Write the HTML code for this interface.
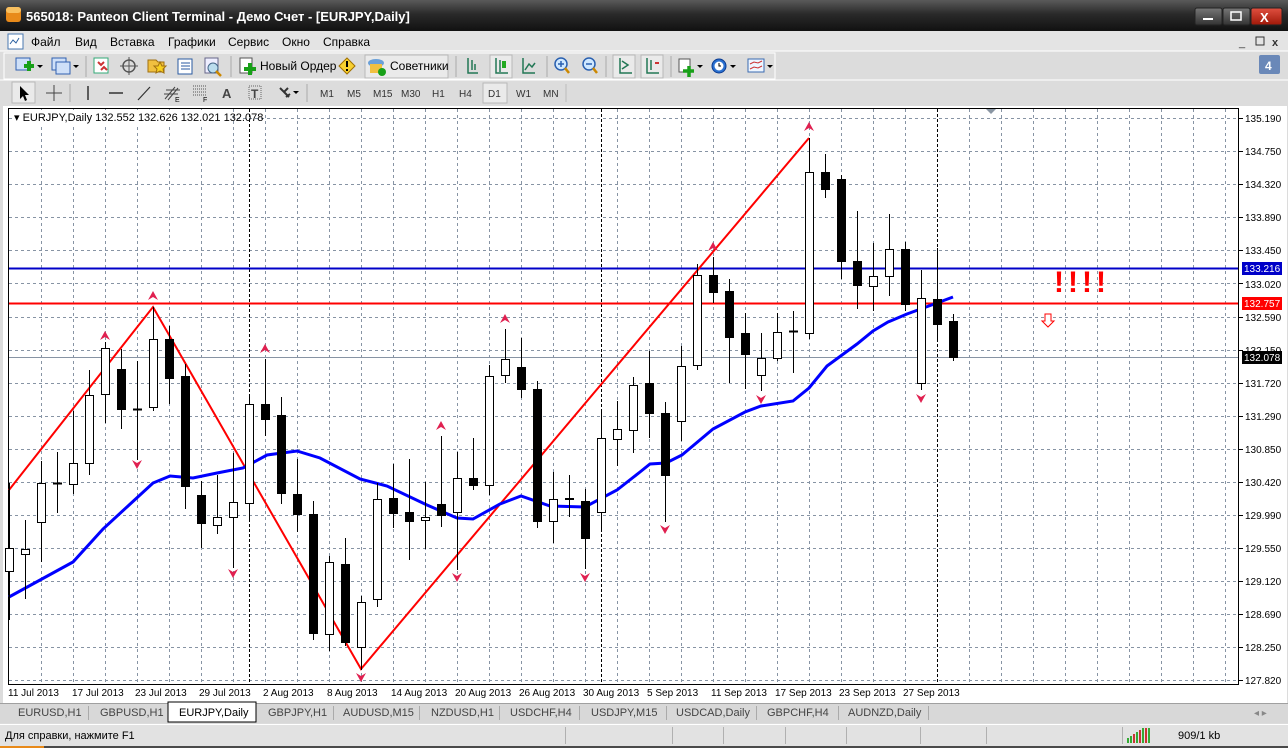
<!DOCTYPE html>
<html><head><meta charset="utf-8"><style>
html,body{margin:0;padding:0;width:1288px;height:748px;overflow:hidden;background:#dcdcdc}
svg{display:block}
text{font-family:"Liberation Sans",sans-serif}
</style></head><body>
<svg width="1288" height="748" viewBox="0 0 1288 748" xmlns="http://www.w3.org/2000/svg">
<defs>
<linearGradient id="tb" x1="0" y1="0" x2="0" y2="1"><stop offset="0" stop-color="#5a5a5a"/><stop offset="0.45" stop-color="#2a2a2a"/><stop offset="1" stop-color="#111"/></linearGradient>
<linearGradient id="cb" x1="0" y1="0" x2="0" y2="1"><stop offset="0" stop-color="#e05040"/><stop offset="1" stop-color="#a01808"/></linearGradient>
<linearGradient id="gb" x1="0" y1="0" x2="0" y2="1"><stop offset="0" stop-color="#777"/><stop offset="1" stop-color="#333"/></linearGradient>
</defs>
<rect x="0" y="0" width="1288" height="31" fill="url(#tb)"/>
<rect x="6" y="7" width="15" height="15" rx="3" fill="#e88a1a"/><rect x="6" y="7" width="15" height="6" rx="3" fill="#f8c060"/>
<text x="26" y="21" font-size="13" font-weight="bold" fill="#fff">565018: Panteon Client Terminal - Демо Счет - [EURJPY,Daily]</text>
<rect x="1195" y="8" width="27" height="17" rx="2" fill="url(#gb)" stroke="#222"/><rect x="1203" y="18" width="10" height="2" fill="#fff"/>
<rect x="1223" y="8" width="27" height="17" rx="2" fill="url(#gb)" stroke="#222"/><rect x="1231" y="12" width="10" height="8" fill="none" stroke="#fff" stroke-width="1.5"/>
<rect x="1251" y="8" width="31" height="17" rx="2" fill="url(#cb)" stroke="#222"/><text x="1260" y="22" font-size="13" font-weight="bold" fill="#fff">X</text>
<rect x="0" y="31" width="1288" height="20" fill="#e4e4e4"/>
<rect x="8" y="34" width="15" height="15" fill="#fff" stroke="#4a78b0"/><path d="M10 44l3-4 3 3 3-5" stroke="#2a60a0" fill="none"/>
<g font-size="12" fill="#000">
<text x="31" y="46">Файл</text><text x="75" y="46">Вид</text><text x="110" y="46">Вставка</text><text x="168" y="46">Графики</text><text x="228" y="46">Сервис</text><text x="282" y="46">Окно</text><text x="323" y="46">Справка</text>
</g>
<text x="1239" y="46" font-size="11" fill="#333">_</text>
<rect x="1256" y="37" width="8" height="8" fill="none" stroke="#333"/><text x="1272" y="46" font-size="11" font-weight="bold" fill="#333">x</text>
<line x1="0" y1="51" x2="1288" y2="51" stroke="#fff"/>
<rect x="0" y="52" width="1288" height="28" fill="#dcdcdc"/>
<rect x="4" y="53" width="771" height="26" fill="none" stroke="#fff"/>
<g>
<rect x="16" y="58" width="14" height="12" fill="#cfe0f8" stroke="#3060b0"/><path d="M24 66h10M29 61v10" stroke="#18a018" stroke-width="4"/><path d="M37 65l3 3 3-3z" fill="#000"/>
<rect x="52" y="58" width="14" height="12" fill="#cfe0f8" stroke="#3060b0"/><rect x="56" y="62" width="14" height="12" fill="#cfe0f8" stroke="#3060b0"/><path d="M73 65l3 3 3-3z" fill="#000"/>
<line x1="86" y1="56" x2="86" y2="77" stroke="#aaa"/>
<rect x="94" y="58" width="14" height="15" fill="#fff" stroke="#3a7"/><path d="M98 62l3 3 3-3M101 70l3-3 3 3" stroke="#c33" stroke-width="2" fill="none"/>
<circle cx="129" cy="66" r="6" fill="none" stroke="#555" stroke-width="1.5"/><path d="M129 57v18M120 66h18" stroke="#555"/>
<path d="M148 60h8l2 2h6v10h-16z" fill="#f0c040" stroke="#a07010"/><path d="M160 62l2 4 4 0-3 3 1 4-4-2-4 2 1-4-3-3 4 0z" fill="#f8d020" stroke="#a07010"/>
<rect x="178" y="59" width="14" height="15" fill="#fff" stroke="#2a5aa0"/><path d="M181 63h9M181 66h9M181 69h9" stroke="#2a5aa0"/>
<rect x="205" y="58" width="13" height="15" fill="#eef" stroke="#668"/><circle cx="213" cy="68" r="5" fill="#bde" stroke="#468"/><path d="M216 71l5 5" stroke="#c80" stroke-width="2.5"/>
<line x1="231" y1="56" x2="231" y2="77" stroke="#aaa"/>
<rect x="240" y="58" width="12" height="15" fill="#fff" stroke="#555"/><path d="M250 63v12M244 69h12" stroke="#18a018" stroke-width="4"/>
<text x="260" y="70" font-size="12">Новый Ордер</text>
<path d="M347 58l8 8-8 8-8-8z" fill="#f8d030" stroke="#a07000"/><rect x="346" y="61" width="2" height="6" fill="#000"/><rect x="346" y="69" width="2" height="2" fill="#000"/>
<rect x="365" y="55" width="83" height="23" fill="#eaeaea" stroke="#b8b8b8"/>
<ellipse cx="376" cy="63" rx="8" ry="4" fill="#6aa0d8"/><rect x="370" y="64" width="12" height="9" fill="#f0c040"/><circle cx="382" cy="72" r="4" fill="#18a018"/>
<text x="390" y="70" font-size="12">Советники</text>
<line x1="456" y1="56" x2="456" y2="77" stroke="#aaa"/>
<path d="M468 58v15h10M472 60v10M475 64v6" stroke="#275" stroke-width="1.5" fill="none"/>
<rect x="490" y="55" width="22" height="23" fill="#eaeaea" stroke="#b8b8b8"/><path d="M496 58v15h12M500 60v12" stroke="#275" stroke-width="1.5" fill="none"/><rect x="502" y="61" width="4" height="7" fill="#2a2"/>
<path d="M523 58v15h12M525 70l4-6 3 3 3-4" stroke="#275" stroke-width="1.5" fill="none"/>
<line x1="547" y1="56" x2="547" y2="77" stroke="#aaa"/>
<circle cx="561" cy="64" r="6" fill="#cfe8ff" stroke="#2a60b0" stroke-width="1.5"/><path d="M558 64h6M561 61v6" stroke="#2a60b0" stroke-width="1.5"/><path d="M565 68l4 5" stroke="#c80" stroke-width="2.5"/>
<circle cx="589" cy="64" r="6" fill="#cfe8ff" stroke="#2a60b0" stroke-width="1.5"/><path d="M586 64h6" stroke="#2a60b0" stroke-width="1.5"/><path d="M593 68l4 5" stroke="#c80" stroke-width="2.5"/>
<line x1="606" y1="56" x2="606" y2="77" stroke="#aaa"/>
<rect x="613" y="55" width="22" height="23" fill="#eaeaea" stroke="#b8b8b8"/><path d="M620 58v15h12M622 61l6 4-6 4" stroke="#275" stroke-width="1.5" fill="none"/>
<rect x="641" y="55" width="22" height="23" fill="#eaeaea" stroke="#b8b8b8"/><path d="M647 58v15h12M651 60v10" stroke="#275" stroke-width="1.5" fill="none"/><path d="M655 63h4" stroke="#c33" stroke-width="2"/>
<line x1="671" y1="56" x2="671" y2="77" stroke="#aaa"/>
<rect x="679" y="59" width="11" height="13" fill="#fff" stroke="#555"/><path d="M689 66v11M683 71h11" stroke="#18a018" stroke-width="3.5"/><path d="M697 65l3 3 3-3z" fill="#000"/>
<circle cx="719" cy="66" r="7" fill="#2a70d0" stroke="#0a3a90"/><circle cx="719" cy="66" r="4.5" fill="#fff"/><path d="M719 63v3h2" stroke="#000" fill="none"/><path d="M730 65l3 3 3-3z" fill="#000"/>
<rect x="748" y="59" width="16" height="13" fill="#eef6ff" stroke="#3a6ab0"/><path d="M750 64l4-2 4 1 4-2M750 69l4-2 4 1 4-2" stroke="#c33" fill="none"/><path d="M767 65l3 3 3-3z" fill="#000"/>
</g>
<rect x="1259" y="55" width="21" height="19" rx="2" fill="#6a88b8"/><text x="1265" y="70" font-size="12" font-weight="bold" fill="#fff">4</text>
<rect x="0" y="80" width="1288" height="25" fill="#dcdcdc"/>
<line x1="0" y1="80" x2="1288" y2="80" stroke="#fff"/>
<rect x="12" y="82" width="23" height="21" fill="#eaeaea" stroke="#b8b8b8"/>
<path d="M20 86v13l3-3 2 5 2-1-2-5h4z" fill="#000"/>
<path d="M54 85v16M46 93h16" stroke="#444"/>
<line x1="70" y1="84" x2="70" y2="102" stroke="#aaa"/>
<path d="M88 86v14" stroke="#333" stroke-width="1.5"/>
<path d="M109 93h14" stroke="#333" stroke-width="1.5"/>
<path d="M138 100l12-13" stroke="#333" stroke-width="1.2"/>
<path d="M165 99l10-12M168 100l10-12M164 94h14M166 90h14" stroke="#444"/><text x="175" y="102" font-size="7">E</text>
<path d="M193 86h14M193 89h14M193 92h14M193 95h14" stroke="#555" stroke-dasharray="1,1"/><text x="203" y="102" font-size="7">F</text>
<text x="222" y="98" font-size="13" font-weight="bold" fill="#444">A</text>
<rect x="249" y="86" width="12" height="13" fill="none" stroke="#666" stroke-dasharray="1,1"/><text x="251" y="98" font-size="12" font-weight="bold" fill="#444">T</text>
<path d="M280 88l4 4 4-4M284 92l5 5M286 97l4-3" stroke="#333" stroke-width="2" fill="none"/><path d="M293 91l3 3 3-3z" fill="#000"/>
<line x1="307" y1="84" x2="307" y2="102" stroke="#aaa"/>
<g font-size="10" fill="#333">
<text x="320" y="97">M1</text><text x="347" y="97">M5</text><text x="373" y="97">M15</text><text x="401" y="97">M30</text><text x="432" y="97">H1</text><text x="459" y="97">H4</text>
<rect x="483" y="83" width="24" height="20" fill="#eaeaea" stroke="#b8b8b8"/><text x="488" y="97">D1</text>
<text x="516" y="97">W1</text><text x="543" y="97">MN</text>
</g>
<line x1="566" y1="84" x2="566" y2="102" stroke="#bbb"/>
<rect x="3" y="106" width="1284" height="597" fill="#fff"/>
<rect x="8.5" y="108.5" width="1230" height="576" fill="#fff" stroke="#000"/>
<path d="M9 118.5H1238M9 151.5H1238M9 184.5H1238M9 217.5H1238M9 250.5H1238M9 283.5H1238M9 317.5H1238M9 350.5H1238M9 383.5H1238M9 416.5H1238M9 449.5H1238M9 482.5H1238M9 515.5H1238M9 548.5H1238M9 581.5H1238M9 614.5H1238M9 647.5H1238M9 680.5H1238" stroke="#8794a4" stroke-dasharray="3,3"/>
<path d="M41.5 109V684M73.5 109V684M105.5 109V684M137.5 109V684M169.5 109V684M201.5 109V684M233.5 109V684M265.5 109V684M297.5 109V684M329.5 109V684M361.5 109V684M393.5 109V684M425.5 109V684M457.5 109V684M489.5 109V684M521.5 109V684M553.5 109V684M585.5 109V684M617.5 109V684M649.5 109V684M681.5 109V684M713.5 109V684M745.5 109V684M777.5 109V684M809.5 109V684M841.5 109V684M873.5 109V684M905.5 109V684M969.5 109V684M1001.5 109V684M1033.5 109V684M1065.5 109V684M1097.5 109V684M1129.5 109V684M1161.5 109V684M1193.5 109V684M1225.5 109V684" stroke="#8794a4" stroke-dasharray="3,3"/>
<path d="M249.5 109V684M601.5 109V684M937.5 109V684" stroke="#000" stroke-dasharray="3,2"/>
<path d="M986 109h10l-5 5z" fill="#8a96a3"/>
<line x1="9" y1="357.5" x2="1238" y2="357.5" stroke="#8794a4"/>
<line x1="9" y1="268.5" x2="1238" y2="268.5" stroke="#0000c8" stroke-width="2"/>
<line x1="9" y1="303.5" x2="1238" y2="303.5" stroke="#ff0000" stroke-width="2"/>
<polyline points="9,490 153,307 361,669 809,138" fill="none" stroke="#ff0000" stroke-width="2"/>
<polyline points="9,597 73,562 103,529 153,483 170,476 193,478 217,473 243,468 267,455 297,451 320,458 360,479 387,486 427,505 457,518 473,519 500,504 521,496 550,506 585,507 617,490 640,472 650,464 666,463 682,455 713,429 745,412 761,406 793,401 809,388 827,366 857,344 873,331 888,322 907,314 937,303 953,297" fill="none" stroke="#0000ff" stroke-width="3"/>
<g stroke="#000" stroke-width="1" shape-rendering="crispEdges">
<path d="M9.5 483V620M25.5 520V599M41.5 461V562M57.5 452V513M73.5 411V494M89.5 370V475M105.5 342V423M121.5 349V429M137.5 361V460M153.5 307V411M169.5 326V404M185.5 364V509M201.5 481V548M217.5 475V534M233.5 453V568M249.5 396V522M265.5 359V436M281.5 397V504M297.5 459V532M313.5 501V640M329.5 556V651M345.5 538V646M361.5 596V670M377.5 483V607M393.5 464V528M409.5 459V560M425.5 482V549M441.5 436V527M457.5 452V570M473.5 438V490M489.5 365V495M505.5 329V383M521.5 338V398M537.5 381V528M553.5 472V543M569.5 475V517M585.5 489V569M601.5 409V531M617.5 401V466M633.5 377V453M649.5 351V438M665.5 402V522M681.5 346V441M697.5 264V370M713.5 257V303M729.5 279V383M745.5 313V389M761.5 333V391M777.5 313V361M793.5 311V373M809.5 138V339M825.5 154V198M841.5 175V279M857.5 211V309M873.5 243V311M889.5 214V296M905.5 242V311M921.5 270V390M937.5 248V340M953.5 314V361"/>
<path d="M53 483.5h9M133 409.5h9M789 331.5h9M565 499h9" stroke-width="2"/>
</g>
<g stroke="#000" shape-rendering="crispEdges">
<g fill="#fff">
<rect x="5.5" y="548.5" width="8" height="23"/><rect x="21.5" y="549.5" width="8" height="5"/><rect x="37.5" y="483.5" width="8" height="39"/><rect x="69.5" y="463.5" width="8" height="21"/><rect x="85.5" y="395.5" width="8" height="68"/><rect x="101.5" y="348.5" width="8" height="46"/><rect x="149.5" y="339.5" width="8" height="68"/><rect x="213.5" y="517.5" width="8" height="8"/><rect x="229.5" y="502.5" width="8" height="15"/><rect x="245.5" y="404.5" width="8" height="99"/><rect x="325.5" y="562.5" width="8" height="72"/><rect x="357.5" y="602.5" width="8" height="45"/><rect x="373.5" y="499.5" width="8" height="100"/><rect x="421.5" y="517.5" width="8" height="3"/><rect x="453.5" y="478.5" width="8" height="34"/><rect x="485.5" y="376.5" width="8" height="109"/><rect x="501.5" y="359.5" width="8" height="16"/><rect x="549.5" y="499.5" width="8" height="22"/><rect x="597.5" y="438.5" width="8" height="74"/><rect x="613.5" y="429.5" width="8" height="10"/><rect x="629.5" y="385.5" width="8" height="45"/><rect x="677.5" y="366.5" width="8" height="55"/><rect x="693.5" y="275.5" width="8" height="90"/><rect x="757.5" y="358.5" width="8" height="17"/><rect x="773.5" y="332.5" width="8" height="26"/><rect x="805.5" y="172.5" width="8" height="161"/><rect x="869.5" y="276.5" width="8" height="10"/><rect x="885.5" y="249.5" width="8" height="27"/><rect x="917.5" y="298.5" width="8" height="85"/>
</g>
<g fill="#000">
<rect x="117.5" y="369.5" width="8" height="40"/><rect x="165.5" y="339.5" width="8" height="39"/><rect x="181.5" y="376.5" width="8" height="110"/><rect x="197.5" y="495.5" width="8" height="28"/><rect x="261.5" y="404.5" width="8" height="15"/><rect x="277.5" y="415.5" width="8" height="78"/><rect x="293.5" y="494.5" width="8" height="20"/><rect x="309.5" y="514.5" width="8" height="119"/><rect x="341.5" y="564.5" width="8" height="78"/><rect x="389.5" y="498.5" width="8" height="15"/><rect x="405.5" y="512.5" width="8" height="9"/><rect x="437.5" y="504.5" width="8" height="11"/><rect x="469.5" y="478.5" width="8" height="7"/><rect x="517.5" y="367.5" width="8" height="22"/><rect x="533.5" y="389.5" width="8" height="132"/><rect x="581.5" y="501.5" width="8" height="37"/><rect x="645.5" y="383.5" width="8" height="30"/><rect x="661.5" y="413.5" width="8" height="62"/><rect x="709.5" y="275.5" width="8" height="17"/><rect x="725.5" y="291.5" width="8" height="46"/><rect x="741.5" y="333.5" width="8" height="21"/><rect x="821.5" y="172.5" width="8" height="17"/><rect x="837.5" y="179.5" width="8" height="82"/><rect x="853.5" y="261.5" width="8" height="24"/><rect x="901.5" y="249.5" width="8" height="55"/><rect x="933.5" y="299.5" width="8" height="25"/><rect x="949.5" y="321.5" width="8" height="36"/>
</g>
</g>
<g fill="#e02050">
<path d="M100 340l5-9 5 9-5-3z"/><path d="M148 300l5-9 5 9-5-3z"/><path d="M260 353l5-9 5 9-5-3z"/><path d="M500 323l5-9 5 9-5-3z"/><path d="M436 430l5-9 5 9-5-3z"/><path d="M708 251l5-9 5 9-5-3z"/><path d="M804 131l5-9 5 9-5-3z"/>
<path d="M132 460l5 9 5-9-5 3z"/><path d="M228 569l5 9 5-9-5 3z"/><path d="M356 673l5 9 5-9-5 3z"/><path d="M452 573l5 9 5-9-5 3z"/><path d="M580 573l5 9 5-9-5 3z"/><path d="M660 525l5 9 5-9-5 3z"/><path d="M756 395l5 9 5-9-5 3z"/><path d="M916 394l5 9 5-9-5 3z"/>
</g>
<g font-size="30" font-weight="bold" fill="#ff0000"><text x="1054" y="292">!</text><text x="1068" y="292">!</text><text x="1082" y="292">!</text><text x="1096" y="292">!</text></g>
<path d="M1045 314h6v7h3l-6 6-6-6h3z" fill="#fff" stroke="#ff0000"/>
<rect x="12" y="110" width="221" height="14" fill="#fff"/>
<text x="14" y="121" font-size="11" fill="#000">▾ EURJPY,Daily  132.552 132.626 132.021 132.078</text>
<g font-size="10" fill="#000">
<text x="1245" y="122">135.190</text><text x="1245" y="155">134.750</text><text x="1245" y="188">134.320</text><text x="1245" y="221">133.890</text><text x="1245" y="254">133.450</text><text x="1245" y="288">133.020</text><text x="1245" y="321">132.590</text><text x="1245" y="354">132.150</text><text x="1245" y="387">131.720</text><text x="1245" y="420">131.290</text><text x="1245" y="453">130.850</text><text x="1245" y="486">130.420</text><text x="1245" y="519">129.990</text><text x="1245" y="552">129.550</text><text x="1245" y="585">129.120</text><text x="1245" y="618">128.690</text><text x="1245" y="651">128.250</text><text x="1245" y="684">127.820</text>
</g>
<path d="M1239 118.5h4M1239 151.5h4M1239 184.5h4M1239 217.5h4M1239 250.5h4M1239 283.5h4M1239 317.5h4M1239 350.5h4M1239 383.5h4M1239 416.5h4M1239 449.5h4M1239 482.5h4M1239 515.5h4M1239 548.5h4M1239 581.5h4M1239 614.5h4M1239 647.5h4M1239 680.5h4" stroke="#000"/>
<rect x="1242" y="262" width="40" height="13" fill="#0000c8"/><text x="1244" y="272" font-size="10" fill="#fff">133.216</text>
<rect x="1242" y="297" width="40" height="13" fill="#ff0000"/><text x="1244" y="307" font-size="10" fill="#fff">132.757</text>
<rect x="1242" y="351" width="40" height="13" fill="#000"/><text x="1244" y="361" font-size="10" fill="#fff">132.078</text>
<g font-size="10" fill="#000">
<text x="8" y="696">11 Jul 2013</text><text x="72" y="696">17 Jul 2013</text><text x="135" y="696">23 Jul 2013</text><text x="199" y="696">29 Jul 2013</text><text x="263" y="696">2 Aug 2013</text><text x="327" y="696">8 Aug 2013</text><text x="391" y="696">14 Aug 2013</text><text x="455" y="696">20 Aug 2013</text><text x="519" y="696">26 Aug 2013</text><text x="583" y="696">30 Aug 2013</text><text x="647" y="696">5 Sep 2013</text><text x="711" y="696">11 Sep 2013</text><text x="775" y="696">17 Sep 2013</text><text x="839" y="696">23 Sep 2013</text><text x="903" y="696">27 Sep 2013</text>
</g>
<rect x="0" y="703" width="1288" height="20" fill="#d8d8d8"/>
<line x1="0" y1="703.5" x2="1288" y2="703.5" stroke="#a0a0a0"/>
<rect x="168" y="702" width="88" height="20" fill="#fff" stroke="#000"/>
<g font-size="11" fill="#444">
<text x="18" y="716">EURUSD,H1</text><text x="100" y="716">GBPUSD,H1</text><text x="179" y="716" fill="#000">EURJPY,Daily</text><text x="268" y="716">GBPJPY,H1</text><text x="343" y="716">AUDUSD,M15</text><text x="431" y="716">NZDUSD,H1</text><text x="510" y="716">USDCHF,H4</text><text x="591" y="716">USDJPY,M15</text><text x="676" y="716">USDCAD,Daily</text><text x="767" y="716">GBPCHF,H4</text><text x="848" y="716">AUDNZD,Daily</text>
</g>
<path d="M88.5 706v14M333.5 706v14M419.5 706v14M499.5 706v14M579.5 706v14M666.5 706v14M756.5 706v14M838.5 706v14M928.5 706v14" stroke="#aaa"/>
<text x="1254" y="716" font-size="10" fill="#888">◂ ▸</text>
<rect x="0" y="724" width="1288" height="22" fill="#e2e2e2"/>
<line x1="0" y1="724.5" x2="1288" y2="724.5" stroke="#fff"/>
<text x="5" y="739" font-size="11" fill="#000">Для справки, нажмите F1</text>
<path d="M565.5 727v17M672.5 727v17M723.5 727v17M785.5 727v17M846.5 727v17M920.5 727v17M986.5 727v17M1122.5 727v17" stroke="#b0b0b0"/>
<g>
<rect x="1127" y="738" width="2" height="5" fill="#3a3"/><rect x="1130" y="736" width="2" height="7" fill="#3a3"/><rect x="1133" y="734" width="2" height="9" fill="#c33"/><rect x="1136" y="732" width="2" height="11" fill="#3a3"/><rect x="1139" y="730" width="2" height="13" fill="#c33"/><rect x="1142" y="728" width="2" height="15" fill="#3a3"/><rect x="1145" y="728" width="2" height="15" fill="#c33"/><rect x="1148" y="728" width="2" height="15" fill="#3a3"/>
</g>
<text x="1178" y="739" font-size="11" fill="#000">909/1 kb</text>
<rect x="0" y="746" width="1288" height="2" fill="#4a4a4a"/><rect x="0" y="746" width="44" height="2" fill="#e88a1a"/>
</svg>
</body></html>
